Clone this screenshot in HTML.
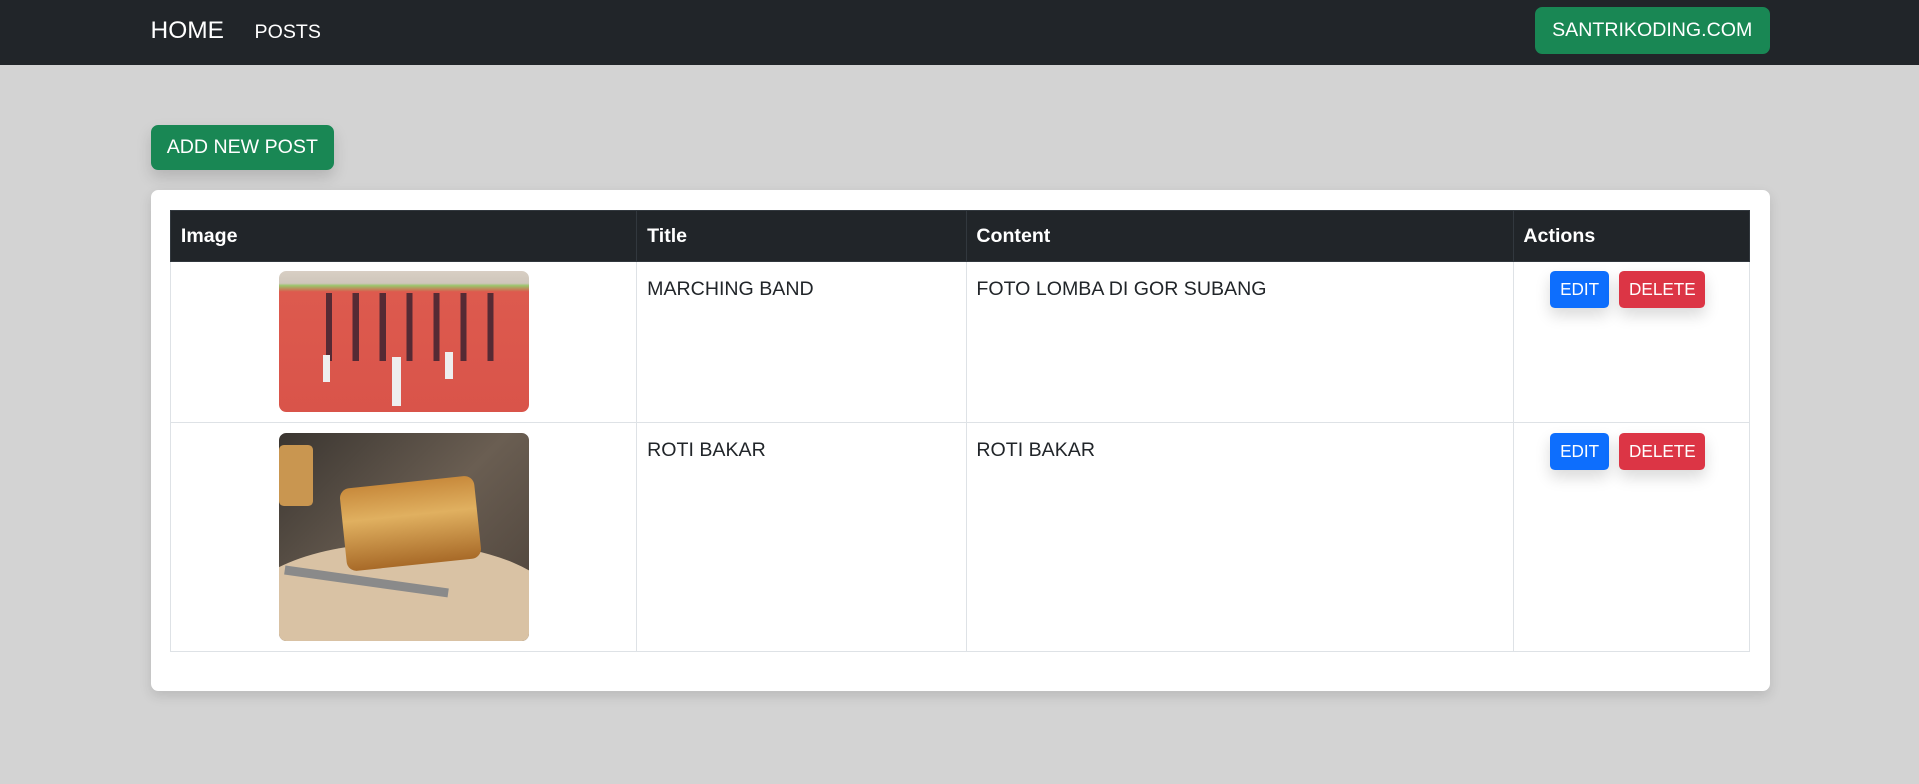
<!DOCTYPE html>
<html><head><meta charset="utf-8">
<style>
html{zoom:1.22385}
*{box-sizing:border-box}
body{margin:0;background:#d3d3d3;font-family:"Liberation Sans",Arial,sans-serif;font-size:16px;color:#212529;width:1568px;height:641px;overflow:hidden}
.nav{height:53px;background:#212529;position:relative}
.brand{position:absolute;left:123px;top:14px;font-size:20px;color:#fff}
.posts{position:absolute;left:208px;top:17px;font-size:16px;color:#fff}
.btn{display:inline-block;color:#fff;border-radius:6px;text-align:center}
.green{background:#198754}
.sk{position:absolute;left:1254px;top:6px;width:192px;height:38px;line-height:38px}
.add{position:absolute;left:123px;top:102px;width:150px;height:37px;line-height:37px;box-shadow:0 6px 12px rgba(0,0,0,.15)}
.card{position:absolute;left:123px;top:155px;width:1323px;height:410px;background:#fff;border-radius:6px;box-shadow:0 4px 10px rgba(0,0,0,.12)}
table{position:absolute;left:16px;top:17px;border-collapse:collapse;width:1291px}
th{background:#212529;color:#fff;text-align:left;font-weight:bold;height:41px;padding:0 8px;border:1px solid #32383e}
th+th{border-left:1px solid #dee2e6}
td{border:1px solid #dee2e6;vertical-align:top;padding:8px}
td.t{padding-top:13px}
.img{margin:0 auto;width:204px;border-radius:6px;overflow:hidden;position:relative}
.b{display:inline-block;color:#fff;border-radius:4px;font-size:14px;height:30px;line-height:30px;padding:0 8px;box-shadow:0 6px 12px rgba(0,0,0,.15)}
.act{padding-left:30px;text-align:left}
</style></head><body>
<div class="nav"><span class="brand">HOME</span><span class="posts">POSTS</span><span class="btn green sk">SANTRIKODING.COM</span></div>
<span class="btn green add">ADD NEW POST</span>
<div class="card">
<table>
<tr><th style="width:381px">Image</th><th style="width:269px">Title</th><th style="width:447px">Content</th><th>Actions</th></tr>
<tr style="height:132px"><td><div class="img" style="height:115px;background:linear-gradient(#d8cfc4 0,#cfc6bb 10px,#9bc46a 12px,#dd5a4e 17px,#d9544a 100%)">
<div style="position:absolute;left:30px;top:18px;width:150px;height:55px;background:repeating-linear-gradient(90deg,transparent 0 8px,rgba(20,20,40,.75) 8px 13px,transparent 13px 22px);opacity:.9"></div>
<div style="position:absolute;left:92px;top:70px;width:8px;height:40px;background:#eee"></div>
<div style="position:absolute;left:36px;top:68px;width:6px;height:22px;background:#eee"></div>
<div style="position:absolute;left:136px;top:66px;width:6px;height:22px;background:#eee"></div>
</div></td>
<td class="t">MARCHING BAND</td><td class="t">FOTO LOMBA DI GOR SUBANG</td>
<td class="act"><span class="b" style="background:#0d6efd">EDIT</span> <span class="b" style="background:#dc3545;margin-left:4px">DELETE</span></td></tr>
<tr style="height:187px"><td><div class="img" style="height:170px;background:linear-gradient(135deg,#3a3530,#6a5e52 50%,#4a4038)">
<div style="position:absolute;left:-30px;top:90px;width:260px;height:110px;border-radius:50%;background:#d9c2a4"></div>
<div style="position:absolute;left:52px;top:40px;width:110px;height:68px;border-radius:8px;background:linear-gradient(#c88a3c,#e0b060 40%,#a86a28);transform:rotate(-6deg)"></div>
<div style="position:absolute;left:0;top:10px;width:28px;height:50px;background:#c99650;border-radius:4px"></div>
<div style="position:absolute;left:4px;top:118px;width:135px;height:7px;background:#8a8a8a;transform:rotate(8deg)"></div>
</div></td>
<td class="t">ROTI BAKAR</td><td class="t">ROTI BAKAR</td>
<td class="act"><span class="b" style="background:#0d6efd">EDIT</span> <span class="b" style="background:#dc3545;margin-left:4px">DELETE</span></td></tr>
</table>
</div>
</body></html>
